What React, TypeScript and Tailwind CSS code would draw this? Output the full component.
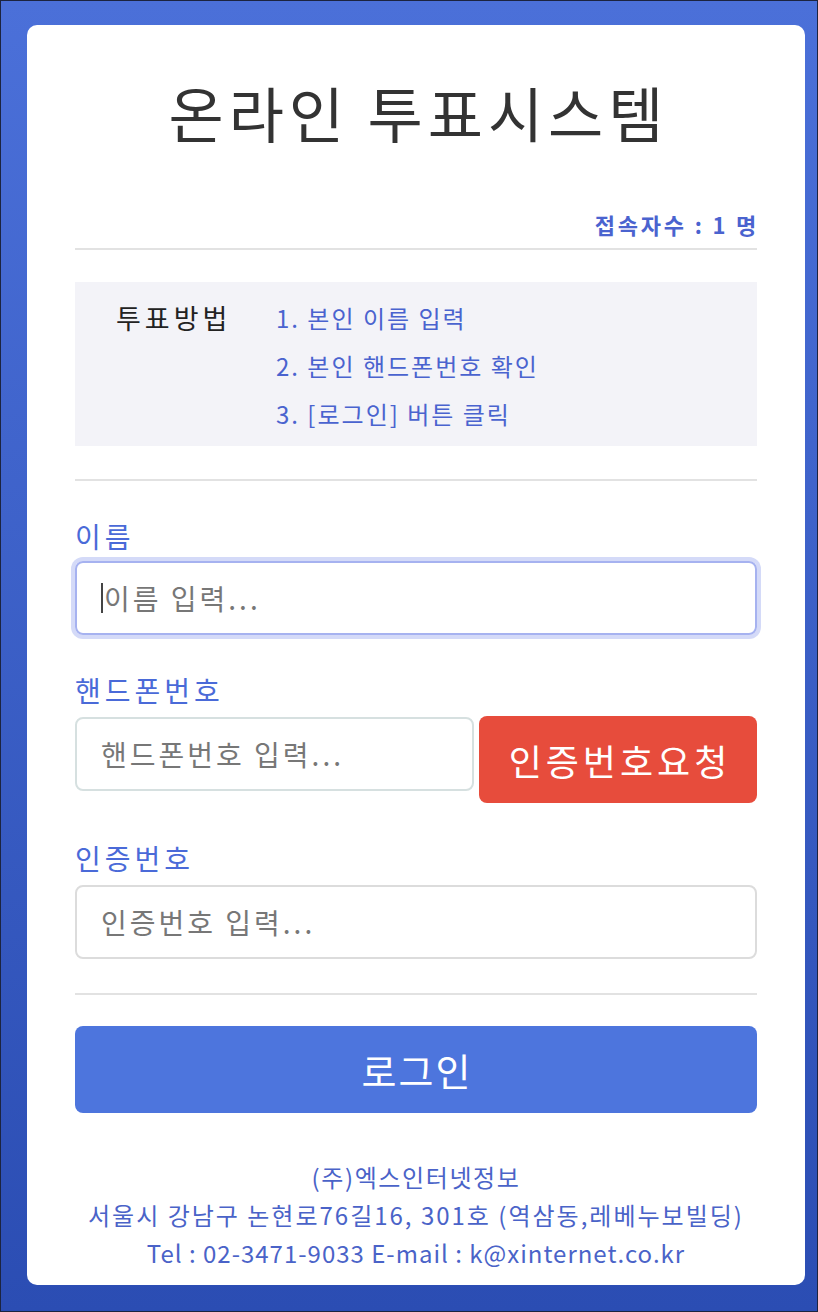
import React from "react";

const font = { fontFamily: '"Noto Sans CJK KR", "Noto Sans", sans-serif' };

export default function App() {
  return (
    <div
      style={font}
      className="w-[818px] h-[1312px] border border-[#1c2440] bg-gradient-to-b from-[#4b70d9] to-[#2b4db3] pt-[24px] px-[26px]"
    >
      <div className="w-[778px] h-[1260px] bg-white rounded-[10px] px-[48px] pt-[43px] flex flex-col">
        <h1 className="text-center text-[60px] leading-[88px] text-[#333] font-normal tracking-[5px] pl-[5px]">
          온라인 투표시스템
        </h1>
        <div className="mt-[53px] text-right text-[22px] leading-[30px] font-bold text-[#4a63cf] tracking-[2.8px] -mr-[2px]">
          접속자수 : 1 명
        </div>
        <div className="mt-[9px] h-[2px] bg-[#e2e2e2]" />
        <div className="mt-[32px] h-[164px] bg-[#f3f3f8] flex pl-[41px] pt-[14px]">
          <div className="w-[160px] text-[27px] leading-[44px] text-[#222] tracking-[4px]">투표방법</div>
          <div className="flex flex-col text-[24px] leading-[48px] text-[#4a63cf] -mt-[2px] tracking-[2px]">
            <span>1. 본인 이름 입력</span>
            <span>2. 본인 핸드폰번호 확인</span>
            <span>3. [로그인] 버튼 클릭</span>
          </div>
        </div>
        <div className="mt-[33px] h-[2px] bg-[#e2e2e2]" />

        <label className="mt-[35px] text-[28px] leading-[40px] text-[#4a6ad8] tracking-[4px]">이름</label>
        <div className="mt-[5px] h-[74px] rounded-[8px] border-2 border-[#a6b2f0] ring-4 ring-[#d4daf8] flex items-center px-[24px]">
          <span className="w-[2px] h-[30px] bg-[#444] mr-[1px]" />
          <span className="text-[28px] text-[#777] tracking-[3px]">이름 입력...</span>
        </div>

        <label className="mt-[35px] text-[28px] leading-[40px] text-[#4a6ad8] tracking-[4px]">핸드폰번호</label>
        <div className="mt-[7px] flex gap-[5px] items-start">
          <div className="w-[399px] h-[74px] rounded-[8px] border-2 border-[#d6e0e0] flex items-center px-[24px]">
            <span className="text-[28px] text-[#777] tracking-[3px]">핸드폰번호 입력...</span>
          </div>
          <div className="flex-1 h-[87px] -mt-[1px] rounded-[8px] bg-[#e74c3c] flex items-center justify-center text-white text-[36px] tracking-[4px] pl-[4px]">
            인증번호요청
          </div>
        </div>

        <label className="mt-[35px] text-[28px] leading-[40px] text-[#4a6ad8] tracking-[4px]">인증번호</label>
        <div className="mt-[7px] h-[74px] rounded-[8px] border-2 border-[#dcdcdc] flex items-center px-[24px]">
          <span className="text-[28px] text-[#777] tracking-[3px]">인증번호 입력...</span>
        </div>

        <div className="mt-[34px] h-[2px] bg-[#e2e2e2]" />
        <div className="mt-[31px] h-[87px] rounded-[8px] bg-[#4d75dd] flex items-center justify-center text-white text-[38px] tracking-[2px] pl-[2px]">
          로그인
        </div>

        <div className="mt-[45px] flex flex-col items-center text-[24px] leading-[38px] text-[#4a63c8]">
          <span className="tracking-[1.6px]">(주)엑스인터넷정보</span>
          <span className="tracking-[2px]">서울시 강남구 논현로76길16, 301호 (역삼동,레베누보빌딩)</span>
          <span className="tracking-[1px]">Tel : 02-3471-9033 E-mail : k@xinternet.co.kr</span>
        </div>
      </div>
    </div>
  );
}
